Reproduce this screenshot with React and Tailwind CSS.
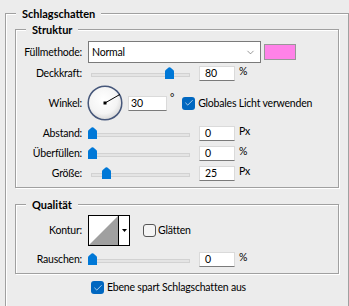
import { Check, ChevronDown } from "lucide-react";

const box =
  "border border-[#a0a0a0] shadow-[inset_1px_1px_0_#fff,1px_1px_0_#fff]";

function Legend({ children }) {
  return (
    <legend className="ml-[10px] bg-[#ececec] px-[6px] text-[11px] leading-[13px] font-bold tracking-normal text-black">
      {children}
    </legend>
  );
}

function Label({ children }) {
  return <div className="w-[66px] shrink-0 text-right">{children}</div>;
}

function Slider({ left }) {
  return (
    <div className="relative ml-[6px] h-[14px] w-[106px] shrink-0">
      <div className="absolute top-[7px] right-[4px] left-[3px] h-[4px] border border-[#d2d2d2] bg-[#e4e4e4]" />
      <svg
        className="absolute top-[1px]"
        style={{ left }}
        width="9"
        height="12"
        viewBox="0 0 9 12"
      >
        <path d="M0 4.5Q0 3.4 1 2.7L3.6 0.5Q4.5 -0.1 5.4 0.5L8 2.7Q9 3.4 9 4.5V12H0Z" fill="#0078d7" />
      </svg>
    </div>
  );
}

function Field({ value, w = "w-[36px]", pad = "pl-[5px]" }) {
  return (
    <div
      className={`${w} ${pad} h-[15px] shrink-0 border border-[#dadada] border-b-[#7a7a7a] bg-white leading-[13px]`}
    >
      {value}
    </div>
  );
}

function Checkbox({ checked }) {
  return checked ? (
    <div className="flex h-[13px] w-[13px] shrink-0 items-center justify-center rounded-[3px] bg-[#0067c0]">
      <Check size={10} strokeWidth={1.6} color="#fff" />
    </div>
  ) : (
    <div className="h-[13px] w-[13px] shrink-0 rounded-[3px] border border-[#555] bg-[#f4f4f4]" />
  );
}

function SliderRow({ label, left, value, unit }) {
  return (
    <div className="flex h-[20px] items-center">
      <Label>{label}</Label>
      <Slider left={left} />
      <div className="ml-[5px]">
        <Field value={value} />
      </div>
      <span className="ml-[4px] self-start pt-[2px]">{unit}</span>
    </div>
  );
}

function Dial() {
  return (
    <svg width="36" height="36" viewBox="0 0 36 36" className="ml-[5px] shrink-0">
      <defs>
        <radialGradient id="dial" cx="0.45" cy="0.4" r="0.6">
          <stop offset="0" stopColor="#ffffff" />
          <stop offset="0.7" stopColor="#f4f4f4" />
          <stop offset="1" stopColor="#d9d9d9" />
        </radialGradient>
      </defs>
      <circle cx="18" cy="18" r="16.8" fill="url(#dial)" stroke="#46577a" strokeWidth="1.5" />
      <line x1="18" y1="18" x2="33" y2="9.4" stroke="#000" strokeWidth="1" />
      <rect x="16.5" y="16.5" width="3" height="3" fill="#000" />
    </svg>
  );
}

function Contour() {
  return (
    <div className="flex h-[31px] w-[42px] shrink-0 border border-black bg-white">
      <svg width="29" height="29" viewBox="0 0 29 29">
        <path d="M0 29L29 0V29Z" fill="#a0a0a0" />
      </svg>
      <div className="flex flex-1 items-center justify-center border-l border-black">
        <svg width="5" height="3" viewBox="0 0 5 3">
          <path d="M0 0H5L2.5 3Z" fill="#000" />
        </svg>
      </div>
    </div>
  );
}

export default function App() {
  return (
    <div className="h-[306px] w-[349px] overflow-hidden bg-[#ececec] font-['Lato',sans-serif] text-[10.5px] leading-[13px] tracking-[-0.2px] text-black">
      <fieldset className={`mt-[7px] ml-[5px] h-[320px] w-[344px] ${box}`}>
        <Legend>Schlagschatten</Legend>

        <fieldset className={`mt-[3px] ml-[9px] w-[324px] pb-[4px] ${box}`}>
          <Legend>Struktur</Legend>
          <div className="mt-[5px] flex h-[22px] items-center">
            <Label>Füllmethode:</Label>
            <div className="ml-[6px] flex h-[22px] w-[173px] items-center justify-between border border-[#7a7a7a] bg-white pr-[4px] pl-[3px]">
              <span>Normal</span>
              <ChevronDown size={11} strokeWidth={1.3} color="#555" />
            </div>
            <div className="ml-[3px] h-[16px] w-[32px] border border-[#989898] bg-[#ff82e8]" />
          </div>
          <SliderRow label="Deckkraft:" left={77} value="80" unit="%" />
          <div className="flex h-[40px] items-center">
            <Label>Winkel:</Label>
            <Dial />
            <div className="ml-[5px]">
              <Field value="30" w="w-[39px]" pad="pl-[2px]" />
            </div>
            <span className="ml-[3px] self-start pt-[9px]">°</span>
            <div className="ml-[8px]">
              <Checkbox checked />
            </div>
            <span className="ml-[3px]">Globales Licht verwenden</span>
          </div>
          <SliderRow label="Abstand:" left={0} value="0" unit="Px" />
          <SliderRow label="Überfüllen:" left={0} value="0" unit="%" />
          <SliderRow label="Größe:" left={14} value="25" unit="Px" />
        </fieldset>

        <fieldset className={`mt-[10px] ml-[9px] w-[324px] pb-[4px] ${box}`}>
          <Legend>Qualität</Legend>
          <div className="mt-[4px] flex h-[31px] items-center">
            <Label>Kontur:</Label>
            <div className="ml-[6px]">
              <Contour />
            </div>
            <div className="ml-[13px]">
              <Checkbox />
            </div>
            <span className="ml-[2px]">Glätten</span>
          </div>
          <div className="mt-[3px]">
            <SliderRow label="Rauschen:" left={0} value="0" unit="%" />
          </div>
        </fieldset>

        <div className="mt-[7px] ml-[85px] flex h-[13px] items-center">
          <Checkbox checked />
          <span className="ml-[3px]">Ebene spart Schlagschatten aus</span>
        </div>
      </fieldset>
    </div>
  );
}
